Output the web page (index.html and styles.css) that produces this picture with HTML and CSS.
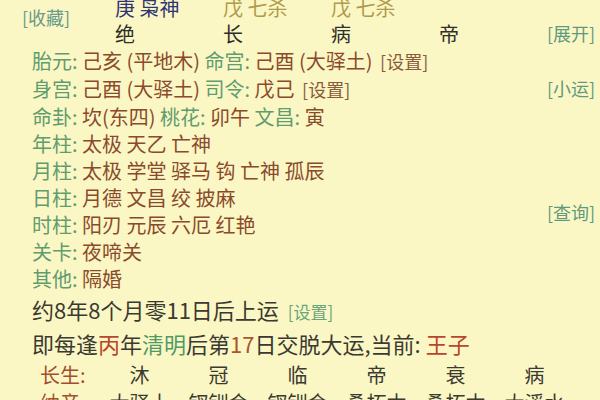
FILE: index.html
```html
<!DOCTYPE html>
<html lang="zh-CN">
<head>
    <meta charset="UTF-8">
    <title>八字排盘</title>
    <link rel="stylesheet" href="styles.css">
</head>
<body>
    <div class="sheet">
        <div class="upper">
            <div class="main">
                <!-- 四柱 -->
                <div class="pillars">
                    <span class="link fav">[收藏]</span>
                    <span class="god god-main">庚 枭神</span>
                    <span class="god">戊 七杀</span>
                    <span class="god">戊 七杀</span>
                    <span></span>
                    <span class="stage">绝</span>
                    <span class="stage">长</span>
                    <span class="stage">病</span>
                    <span class="stage">帝</span>
                </div>

                <div class="info-row"><span class="lbl">胎元:</span> <span class="val">己亥 (平地木)</span> <span class="lbl">命宫:</span> <span class="val">己酉 (大驿土)</span> <span class="set">[设置]</span></div>
                <div class="info-row"><span class="lbl">身宫:</span> <span class="val">己酉 (大驿土)</span> <span class="lbl">司令:</span> <span class="val">戊己</span> <span class="set">[设置]</span></div>
                <div class="info-row"><span class="lbl">命卦:</span> <span class="val">坎(东四)</span> <span class="lbl">桃花:</span> <span class="val">卯午</span> <span class="lbl">文昌:</span> <span class="val">寅</span></div>
                <div class="info-row"><span class="lbl">年柱:</span> <span class="val">太极 天乙 亡神</span></div>
                <div class="info-row"><span class="lbl">月柱:</span> <span class="val">太极 学堂 驿马 钩 亡神 孤辰</span></div>
                <div class="info-row"><span class="lbl">日柱:</span> <span class="val">月德 文昌 绞 披麻</span></div>
                <div class="info-row"><span class="lbl">时柱:</span> <span class="val">阳刃 元辰 六厄 红艳</span></div>
                <div class="info-row"><span class="lbl">关卡:</span> <span class="val">夜啼关</span></div>
                <div class="info-row"><span class="lbl">其他:</span> <span class="val">隔婚</span></div>
            </div>

            <div class="side">
                <span class="link open">[展开]</span>
                <span class="link small-luck">[小运]</span>
                <span class="link query">[查询]</span>
            </div>
        </div>

        <div class="notice">约8年8个月零11日后上运 <span class="link set-green">[设置]</span></div>
        <div class="notice">即每逢<span class="hl-red">丙</span>年<span class="hl-green">清明</span>后第<span class="hl-num">17</span>日交脱大运,当前: <span class="hl-red">王子</span></div>

        <div class="luck-grid">
            <span class="luck-lbl">长生:</span>
            <span>沐</span><span>冠</span><span>临</span><span>帝</span><span>衰</span><span>病</span><span></span>
            <span class="luck-lbl">纳音:</span>
            <span>大驿土</span><span>钗钏金</span><span>钗钏金</span><span>桑柘木</span><span>桑柘木</span><span>大溪水</span><span>大</span>
        </div>
    </div>
</body>
</html>
```

FILE: styles.css
```css
body {
    margin: 0;
    background: #fbf7c4;
    font-family: "Noto Sans CJK SC", "Noto Sans", sans-serif;
    color: #3a3a32;
    overflow: hidden;
}

.sheet {
    margin-top: -5px;
}

.upper {
    display: flex;
}

.main {
    flex: 1;
}

.side {
    width: 55px;
    display: flex;
    flex-direction: column;
    align-items: flex-start;
}

.link {
    font-size: 18px;
    line-height: 24px;
    color: #5f9a80;
    white-space: nowrap;
}

.open { margin-top: 26px; }
.small-luck { margin-top: 31px; }
.query { margin-top: 100px; }

/* pillars header */
.pillars {
    display: grid;
    grid-template-columns: 115px 108px 108px 108px 108px;
    grid-template-rows: 26px 26px;
    align-items: center;
    font-size: 20px;
    line-height: 26px;
    white-space: nowrap;
}

.fav {
    grid-row: 1 / span 2;
    padding-left: 22px;
    margin-bottom: 8px;
    color: #6a9a8c;
}

.god {
    color: #b09a4c;
}

.god-main {
    color: #2f3574;
}

.stage {
    color: #2e2e2a;
}

/* info rows */
.info-row {
    padding-left: 32px;
    font-size: 20px;
    line-height: 27px;
    white-space: nowrap;
}

.lbl {
    color: #5f9c70;
}

.val {
    color: #8a4a2c;
}

.set {
    color: #8a5a3c;
    font-size: 18px;
    margin-left: 3px;
}

/* 大运 */
.notice {
    padding-left: 32px;
    font-size: 22px;
    line-height: 34px;
    color: #3a3a32;
    white-space: nowrap;
}

.notice:first-of-type {
    margin-top: 2px;
}

.set-green {
    color: #6aa67c;
    font-size: 17px;
    margin-left: 4px;
}

.hl-red { color: #b9452e; }
.hl-green { color: #4f9a66; }
.hl-num { color: #a9562c; }

.luck-grid {
    display: grid;
    grid-template-columns: 100px repeat(7, 79px);
    grid-template-rows: 30px 26px;
    align-items: center;
    font-size: 20px;
    line-height: 26px;
    color: #3a3a32;
    white-space: nowrap;
}

.luck-grid span {
    text-align: center;
}

.luck-grid .luck-lbl {
    text-align: left;
    padding-left: 40px;
    color: #a0502e;
}
```
